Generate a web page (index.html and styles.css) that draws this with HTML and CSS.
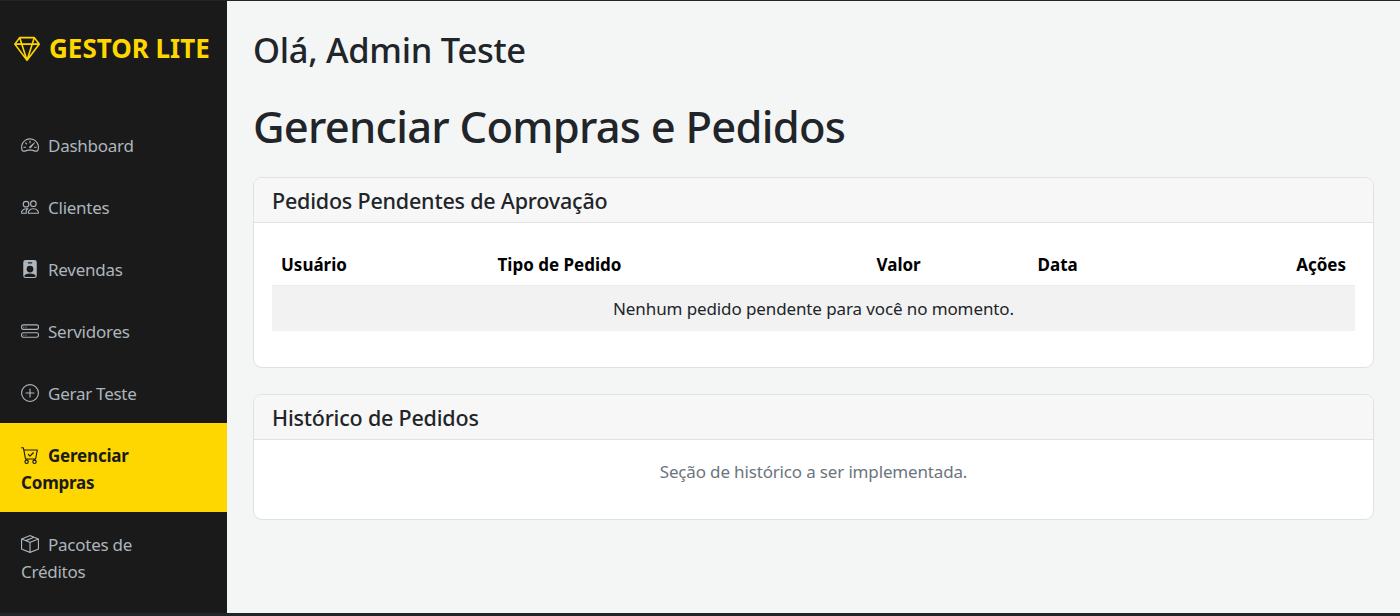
FILE: index.html
```html
<!DOCTYPE html>
<html lang="pt-BR">
<head>
<meta charset="utf-8">
<title>Gestor Lite</title>
<link rel="stylesheet" href="styles.css">
</head>
<body>
<div class="app">
  <aside class="sidebar">
    <div class="brand">
      <svg class="brand-icon" viewBox="0 0 16 16" fill="currentColor"><path d="M3.1.7a.5.5 0 0 1 .4-.2h9a.5.5 0 0 1 .4.2l2.976 3.974c.149.185.156.45.01.644L8.4 15.3a.5.5 0 0 1-.8 0L.1 5.3a.5.5 0 0 1 0-.6l3-4zm11.386 3.785-1.806-2.41-.776 2.413 2.582-.003zm-3.633.004.961-2.989H4.186l.963 2.995 5.704-.006zM5.47 5.495 8 13.366l2.532-7.876-5.062.005zm-1.371-.999-.78-2.422-1.818 2.425 2.598-.003zM1.499 5.5l5.113 6.817-2.192-6.82L1.5 5.5zm7.889 6.817 5.123-6.83-2.928.002-2.195 6.828z"/></svg>
      <span>GESTOR LITE</span>
    </div>
    <nav class="nav">
      <a class="nav-link" href="#"><svg class="nav-icon" viewBox="0 0 16 16" fill="currentColor"><path d="M8 4a.5.5 0 0 1 .5.5V6a.5.5 0 0 1-1 0V4.5A.5.5 0 0 1 8 4zM3.732 5.732a.5.5 0 0 1 .707 0l.915.914a.5.5 0 1 1-.708.708l-.914-.915a.5.5 0 0 1 0-.707zM2 10a.5.5 0 0 1 .5-.5h1.586a.5.5 0 0 1 0 1H2.5A.5.5 0 0 1 2 10zm9.5 0a.5.5 0 0 1 .5-.5h1.5a.5.5 0 0 1 0 1H12a.5.5 0 0 1-.5-.5zm.754-4.246a.389.389 0 0 0-.527-.02L7.547 9.31a.91.91 0 1 0 1.302 1.258l3.434-4.297a.389.389 0 0 0-.029-.518z"/><path fill-rule="evenodd" d="M0 10a8 8 0 1 1 15.547 2.661c-.442 1.253-1.845 1.602-2.932 1.25C11.309 13.488 9.475 13 8 13c-1.474 0-3.31.488-4.615.911-1.087.352-2.49.003-2.932-1.25A7.988 7.988 0 0 1 0 10zm8-7a7 7 0 0 0-6.603 9.329c.203.575.923.876 1.68.63C4.397 12.533 6.358 12 8 12s3.604.532 4.923.96c.757.245 1.477-.056 1.68-.631A7 7 0 0 0 8 3z"/></svg>Dashboard</a>
      <a class="nav-link" href="#"><svg class="nav-icon" viewBox="0 0 16 16" fill="currentColor"><path d="M15 14s1 0 1-1-1-4-5-4-5 3-5 4 1 1 1 1h8Zm-7.978-1A.261.261 0 0 1 7 12.996c.001-.264.167-1.03.76-1.72C8.312 10.629 9.282 10 11 10c1.717 0 2.687.63 3.24 1.276.593.69.758 1.457.76 1.72l-.008.002a.274.274 0 0 1-.014.002H7.022ZM11 7a2 2 0 1 0 0-4 2 2 0 0 0 0 4Zm3-2a3 3 0 1 1-6 0 3 3 0 0 1 6 0ZM6.936 9.28a5.88 5.88 0 0 0-1.23-.247A7.35 7.35 0 0 0 5 9c-4 0-5 3-5 4 0 .667.333 1 1 1h4.216A2.238 2.238 0 0 1 5 13c0-1.01.377-2.042 1.09-2.904.243-.294.526-.569.846-.816ZM4.92 10A5.493 5.493 0 0 0 4 13H1c0-.26.164-1.03.76-1.724.545-.636 1.492-1.256 3.16-1.275ZM1.5 5.5a3 3 0 1 1 6 0 3 3 0 0 1-6 0Zm3-2a2 2 0 1 0 0 4 2 2 0 0 0 0-4Z"/></svg>Clientes</a>
      <a class="nav-link" href="#"><svg class="nav-icon" viewBox="0 0 16 16" fill="currentColor"><path d="M2 2a2 2 0 0 1 2-2h8a2 2 0 0 1 2 2v12a2 2 0 0 1-2 2H4a2 2 0 0 1-2-2V2zm4.5 0a.5.5 0 0 0 0 1h3a.5.5 0 0 0 0-1h-3zM8 11a3 3 0 1 0 0-6 3 3 0 0 0 0 6zm5 2.755C12.146 12.825 10.623 12 8 12s-4.146.826-5 1.755V14a1 1 0 0 0 1 1h8a1 1 0 0 0 1-1v-.245z"/></svg>Revendas</a>
      <a class="nav-link" href="#"><svg class="nav-icon" viewBox="0 0 16 16" fill="currentColor"><path d="M14 10a1 1 0 0 1 1 1v1a1 1 0 0 1-1 1H2a1 1 0 0 1-1-1v-1a1 1 0 0 1 1-1h12zM2 9a2 2 0 0 0-2 2v1a2 2 0 0 0 2 2h12a2 2 0 0 0 2-2v-1a2 2 0 0 0-2-2H2z"/><path d="M5 11.5a.5.5 0 1 1-1 0 .5.5 0 0 1 1 0zm-2 0a.5.5 0 1 1-1 0 .5.5 0 0 1 1 0zM14 3a1 1 0 0 1 1 1v1a1 1 0 0 1-1 1H2a1 1 0 0 1-1-1V4a1 1 0 0 1 1-1h12zM2 2a2 2 0 0 0-2 2v1a2 2 0 0 0 2 2h12a2 2 0 0 0 2-2V4a2 2 0 0 0-2-2H2z"/><path d="M5 4.5a.5.5 0 1 1-1 0 .5.5 0 0 1 1 0zm-2 0a.5.5 0 1 1-1 0 .5.5 0 0 1 1 0z"/></svg>Servidores</a>
      <a class="nav-link" href="#"><svg class="nav-icon" viewBox="0 0 16 16" fill="currentColor"><path d="M8 15A7 7 0 1 1 8 1a7 7 0 0 1 0 14zm0 1A8 8 0 1 0 8 0a8 8 0 0 0 0 16z"/><path d="M8 4a.5.5 0 0 1 .5.5v3h3a.5.5 0 0 1 0 1h-3v3a.5.5 0 0 1-1 0v-3h-3a.5.5 0 0 1 0-1h3v-3A.5.5 0 0 1 8 4z"/></svg>Gerar Teste</a>
      <a class="nav-link active" href="#"><svg class="nav-icon" viewBox="0 0 16 16" fill="currentColor"><path d="M11.354 6.354a.5.5 0 0 0-.708-.708L8 8.293 6.854 7.146a.5.5 0 1 0-.708.708l1.5 1.5a.5.5 0 0 0 .708 0l3-3z"/><path d="M.5 1a.5.5 0 0 0 0 1h1.11l.401 1.607 1.498 7.985A.5.5 0 0 0 4 12h1a2 2 0 1 0 0 4 2 2 0 0 0 0-4h7a2 2 0 1 0 0 4 2 2 0 0 0 0-4h1a.5.5 0 0 0 .491-.408l1.5-8A.5.5 0 0 0 14.5 3H2.89l-.405-1.621A.5.5 0 0 0 2 1H.5zm3.915 10L3.102 4h10.796l-1.313 7h-8.17zM6 14a1 1 0 1 1-2 0 1 1 0 0 1 2 0zm7 0a1 1 0 1 1-2 0 1 1 0 0 1 2 0z"/></svg>Gerenciar Compras</a>
      <a class="nav-link" href="#"><svg class="nav-icon" viewBox="0 0 16 16" fill="currentColor"><path d="M8.186 1.113a.5.5 0 0 0-.372 0L1.846 3.5l2.404.961L10.404 2l-2.218-.887zm3.564 1.426L5.596 5 8 5.961 14.154 3.5l-2.404-.961zm3.25 1.7-6.5 2.6v7.922l6.5-2.6V4.24zM7.5 14.762V6.838L1 4.239v7.925l6.5 2.6zM7.443.184a1.5 1.5 0 0 1 1.114 0l7.129 2.852A.5.5 0 0 1 16 3.5v8.662a1 1 0 0 1-.629.928l-7.185 2.874a.5.5 0 0 1-.372 0L.63 13.09a1 1 0 0 1-.63-.928V3.5a.5.5 0 0 1 .314-.464L7.443.184z"/></svg>Pacotes de Créditos</a>
    </nav>
  </aside>
  <main class="main">
    <h2 class="greeting">Olá, Admin Teste</h2>
    <h1 class="title">Gerenciar Compras e Pedidos</h1>
    <section class="card card-first">
      <h5 class="card-header">Pedidos Pendentes de Aprovação</h5>
      <div class="card-body">
        <table class="table">
          <colgroup><col class="c1"><col class="c2"><col class="c3"><col class="c4"><col></colgroup>
          <thead>
            <tr><th>Usuário</th><th>Tipo de Pedido</th><th>Valor</th><th>Data</th><th class="right">Ações</th></tr>
          </thead>
          <tbody>
            <tr><td colspan="5" class="empty">Nenhum pedido pendente para você no momento.</td></tr>
          </tbody>
        </table>
      </div>
    </section>
    <section class="card">
      <h5 class="card-header">Histórico de Pedidos</h5>
      <div class="card-body">
        <p class="muted">Seção de histórico a ser implementada.</p>
      </div>
    </section>
  </main>
</div>
</body>
</html>
```
FILE: styles.css
```css
* { box-sizing: border-box; }
html, body { margin: 0; height: 100%; }
body {
  font-family: "Noto Sans", "Open Sans", sans-serif;
  font-size: 17px;
  line-height: 27px;
  color: #212529;
  background: #212529;
  overflow: hidden;
}
.app {
  display: flex;
  height: 612px;
  margin-top: 1px;
}
.sidebar {
  width: 227px;
  flex: none;
  background: #1a1a1a;
  overflow: hidden;
}
.brand {
  display: flex;
  align-items: center;
  gap: 9px;
  height: 95px;
  padding: 0 0 0 14px;
  color: #ffd700;
  font-size: 26px;
  font-weight: 700;
  white-space: nowrap;
}
.brand-icon { width: 26px; height: 26px; }
.nav { display: flex; flex-direction: column; padding-top: 16.8px; }
.nav-link {
  display: block;
  padding: 19px 36px 16px 21px;
  color: #adb5bd;
  text-decoration: none;
  letter-spacing: -0.25px;
}
.nav-link.active {
  background: #ffd700;
  color: #1a1a1a;
  font-weight: 700;
  letter-spacing: -0.2px;
}
.nav-icon {
  width: 18px;
  height: 18px;
  margin-right: 9px;
  vertical-align: -2px;
}
.main {
  flex: 1;
  padding: 27px 26px 0 26px;
  background: #f4f6f6;
  min-width: 0;
}
.greeting {
  margin: 0 0 28px;
  font-size: 34.5px;
  line-height: 43px;
  font-weight: 500;
  letter-spacing: -0.3px;
}
.title {
  margin: 0 0 24px;
  font-size: 43.5px;
  line-height: 54px;
  font-weight: 500;
  letter-spacing: -0.75px;
}
.card {
  background: #fff;
  border: 1px solid #dfe1e2;
  border-radius: 9px;
  overflow: hidden;
}
.card-first { margin-bottom: 26px; }
.card-header {
  margin: 0;
  padding: 9px 18px;
  height: 45px;
  font-size: 21.5px;
  line-height: 27px;
  font-weight: 500;
  letter-spacing: -0.2px;
  background: #f7f7f7;
  border-bottom: 1px solid #dfe1e2;
}
.card-body { padding: 18px; }
.table {
  width: 100%;
  table-layout: fixed;
  border-collapse: collapse;
  margin-bottom: 18px;
  color: #000;
}
.c1 { width: 216.5px; }
.c2 { width: 379px; }
.c3 { width: 161px; }
.c4 { width: 200px; }
.table th {
  padding: 10px 9px 7px;
  text-align: left;
  font-weight: 700;
}
.table th.right { text-align: right; }
.empty {
  padding: 9px;
  text-align: center;
  background: #f2f2f2;
  color: #212529;
  letter-spacing: -0.11px;
  border-top: 1px solid #ececec;
}
.muted {
  margin: 0 0 16px;
  text-align: center;
  color: #6c757d;
  letter-spacing: -0.16px;
}
```
